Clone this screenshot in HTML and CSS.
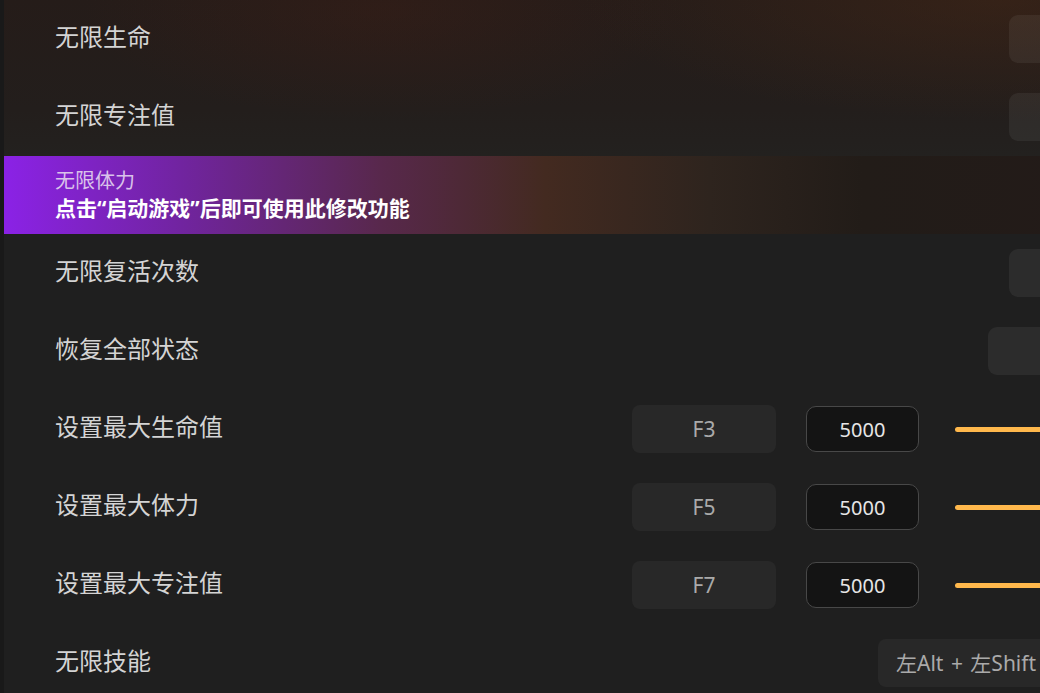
FILE: index.html
```html
<!DOCTYPE html>
<html>
	<head>
		<title>修改器</title>
		<meta name="viewport" content="width=device-width, initial-scale=1" />
		<link rel="stylesheet" href="styles.css">
	</head>
	<body>
		<div class="list">
			<div class="hero">
				<div class="row">
					<span class="label">无限生命</span>
					<button class="toggle"></button>
				</div>
				<div class="row">
					<span class="label">无限专注值</span>
					<button class="toggle"></button>
				</div>
			</div>

			<div class="row active">
				<div class="label">
					<div class="title">无限体力</div>
					<div class="hint">点击“启动游戏”后即可使用此修改功能</div>
				</div>
			</div>

			<div class="row">
				<span class="label">无限复活次数</span>
				<button class="toggle"></button>
			</div>
			<div class="row">
				<span class="label">恢复全部状态</span>
				<button class="toggle wide"></button>
			</div>
			<div class="row">
				<span class="label">设置最大生命值</span>
				<span class="key">F3</span>
				<input class="value" type="text" value="5000" />
				<span class="slider"></span>
			</div>
			<div class="row">
				<span class="label">设置最大体力</span>
				<span class="key">F5</span>
				<input class="value" type="text" value="5000" />
				<span class="slider"></span>
			</div>
			<div class="row">
				<span class="label">设置最大专注值</span>
				<span class="key">F7</span>
				<input class="value" type="text" value="5000" />
				<span class="slider"></span>
			</div>
			<div class="row">
				<span class="label">无限技能</span>
				<span class="key combo">左Alt + 左Shift</span>
			</div>
		</div>
	</body>
</html>
```

FILE: styles.css
```css
html,
body {
	margin: 0;
	padding: 0;
	height: 100%;
	overflow: hidden;
	background-color: #1f1f1f;
}
body {
	font-family: "Noto Sans", "Noto Sans CJK SC", sans-serif;
	color: #d4d4d4;
}
.list {
	width: 1176px;
	min-height: 100%;
	border-left: 4px solid #191919;
	background-color: #1f1f1f;
}
.hero {
	background:
		radial-gradient(ellipse 420px 120px at 1000px 0px, rgba(70, 40, 22, 0.5), transparent),
		radial-gradient(ellipse 300px 110px at 380px 10px, rgba(60, 30, 22, 0.45), transparent),
		linear-gradient(180deg, #251c19 0%, #231e1c 70%, #23211f 100%);
}
.row {
	display: flex;
	align-items: center;
	height: 78px;
	padding-left: 51px;
	padding-right: 30px;
	box-sizing: border-box;
}
.label {
	flex: 1;
	padding-bottom: 6px;
	font-family: "Noto Sans CJK SC", sans-serif;
	font-size: 24px;
	line-height: 32px;
	color: #d4d4d4;
}
.row.active {
	background: linear-gradient(90deg, #8b22e6 0%, #7124a0 15%, #58284c 32%, #432a20 46%, #2e241e 60%, #221c18 73%, #231a18 100%);
}
.active .label {
	padding-bottom: 2px;
}
.active .title {
	font-size: 20px;
	line-height: 28px;
	color: #d9c2ea;
}
.active .hint {
	font-family: "Noto Sans", "Noto Sans CJK SC", sans-serif;
	font-size: 21px;
	line-height: 28px;
	font-weight: bold;
	color: #ffffff;
}
.toggle {
	width: 141px;
	height: 48px;
	border: none;
	border-radius: 9px;
	background-color: rgba(255, 255, 255, 0.06);
}
.toggle.wide {
	width: 162px;
}
.key {
	flex: 0 0 144px;
	height: 48px;
	line-height: 48px;
	text-align: center;
	border-radius: 8px;
	background-color: #282828;
	color: #aaaaaa;
	font-size: 21px;
}
.key.combo {
	flex: 0 0 272px;
	text-align: left;
	padding-left: 18px;
	box-sizing: border-box;
	word-spacing: 2px;
}
.value {
	width: 113px;
	height: 46px;
	margin-left: 30px;
	padding: 0;
	box-sizing: border-box;
	border: 1px solid #484848;
	border-radius: 10px;
	background-color: #141414;
	color: #e6e6e6;
	font-family: "Noto Sans", sans-serif;
	font-size: 20px;
	text-align: center;
}
.slider {
	flex: 0 0 195px;
	height: 5px;
	margin-left: 36px;
	border-radius: 3px 0 0 3px;
	background-color: #ffb84c;
}
```
